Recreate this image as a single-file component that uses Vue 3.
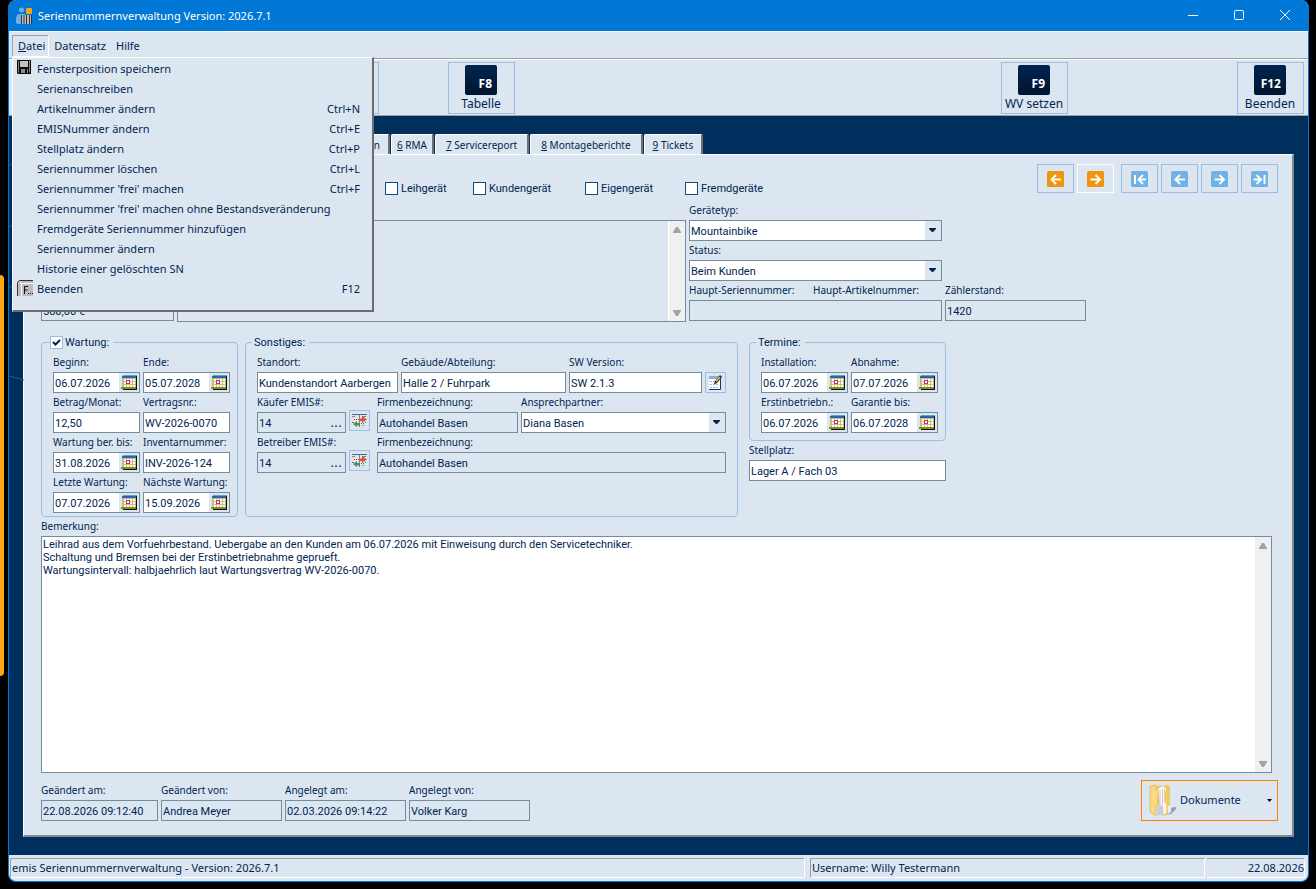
<script setup>
import { h, ref } from 'vue'

const menuItems = [
  { text: 'Fensterposition speichern', icon: 'disk' },
  { text: 'Serienanschreiben' },
  { text: 'Artikelnummer ändern', key: 'Ctrl+N' },
  { text: 'EMISNummer ändern', key: 'Ctrl+E' },
  { text: 'Stellplatz ändern', key: 'Ctrl+P' },
  { text: 'Seriennummer löschen', key: 'Ctrl+L' },
  { text: "Seriennummer 'frei' machen", key: 'Ctrl+F' },
  { text: "Seriennummer 'frei' machen ohne Bestandsveränderung" },
  { text: 'Fremdgeräte Seriennummer hinzufügen' },
  { text: 'Seriennummer ändern' },
  { text: 'Historie einer gelöschten SN' },
  { text: 'Beenden', key: 'F12', icon: 'fkey' }
]

const tabs = [
  { n: '6', text: 'RMA' },
  { n: '7', text: 'Servicereport' },
  { n: '8', text: 'Montageberichte' },
  { n: '9', text: 'Tickets' }
]

const navButtons = [
  { label: 'Zurück', dir: 'left', tone: 'orange' },
  { label: 'Vor', dir: 'right', tone: 'orange' },
  { label: 'Erster', dir: 'first', tone: 'blue' },
  { label: 'Vorheriger', dir: 'left', tone: 'blue' },
  { label: 'Nächster', dir: 'right', tone: 'blue' },
  { label: 'Letzter', dir: 'last', tone: 'blue' }
]
const arrowPaths = {
  left: 'M14 8.500H4.500M9 4L4.500 8.500L9 13',
  right: 'M3.500 8.500H13M8.500 4L13 8.500L8.500 13',
  first: 'M4 4V13M15 8.500H7.500M12 4L7.500 8.500L12 13',
  last: 'M13.500 4V13M2.500 8.500H10M5.500 4L10 8.500L5.500 13'
}

const maintenance = ref([
  { id: 'beginn', label: 'Beginn:', value: '06.07.2026', date: true },
  { id: 'ende', label: 'Ende:', value: '05.07.2028', date: true },
  { id: 'betrag', label: 'Betrag/Monat:', value: '12,50' },
  { id: 'vertrag', label: 'Vertragsnr.:', value: 'WV-2026-0070' },
  { id: 'berechnet', label: 'Wartung ber. bis:', value: '31.08.2026', date: true },
  { id: 'inventar', label: 'Inventarnummer:', value: 'INV-2026-124' },
  { id: 'letzte', label: 'Letzte Wartung:', value: '07.07.2026', date: true },
  { id: 'naechste', label: 'Nächste Wartung:', value: '15.09.2026', date: true }
])
const dates = ref([
  { id: 'installation', label: 'Installation:', value: '06.07.2026', date: true },
  { id: 'abnahme', label: 'Abnahme:', value: '07.07.2026', date: true },
  { id: 'erstinbetriebnahme', label: 'Erstinbetriebn.:', value: '06.07.2026', date: true },
  { id: 'garantie', label: 'Garantie bis:', value: '06.07.2028', date: true }
])
const audit = [
  { id: 'geaendert-am', label: 'Geändert am:', value: '22.08.2026 09:12:40' },
  { id: 'geaendert-von', label: 'Geändert von:', value: 'Andrea Meyer' },
  { id: 'angelegt-am', label: 'Angelegt am:', value: '02.03.2026 09:14:22' },
  { id: 'angelegt-von', label: 'Angelegt von:', value: 'Volker Karg' }
]
const remark = ref(`Leihrad aus dem Vorfuehrbestand. Uebergabe an den Kunden am 06.07.2026 mit Einweisung durch den Servicetechniker.
Schaltung und Bremsen bei der Erstinbetriebnahme geprueft.
Wartungsintervall: halbjaehrlich laut Wartungsvertrag WV-2026-0070.`)
const serviced = ref(true)

const r = (x, y, width, height, fill) => h('rect', { x, y, width, height, fill })
const svg = (w, ht, kids) =>
  h('svg', { width: w, height: ht, viewBox: `0 0 ${w} ${ht}`, 'aria-hidden': 'true' }, kids)

const CalendarIcon = () => svg(16, 15, [
  r(15, 1, 1, 13, '#111'), r(2, 14, 14, 1, '#111'),
  r(1, 1, 14, 12, '#c3c174'), r(2, 0, 14, 1, '#58a8cc'), r(1, 1, 14, 2, '#2d62ae'),
  r(3, 4, 11, 8, '#fff'),
  h('path', { d: 'M3 6.500H14M3 9.500H14M5.500 4V12M8.500 4V12M11.500 4V12', stroke: '#c3c174', fill: 'none' }),
  h('rect', { x: 5.5, y: 5.5, width: 3, height: 3, fill: '#fff', stroke: '#cc287c' }),
  r(0, 12, 15, 2, '#8a8820')
])
const SwapIcon = () => svg(17, 15, [
  r(1, 1, 15, 1, '#4d6690'), r(8, 2, 1, 12, '#7088ac'),
  r(1, 3, 3, 1, '#df6b53'), r(11, 3, 4, 1, '#54995b'),
  r(3, 6, 1, 1, '#c23'), r(5, 6, 1, 1, '#c23'), r(7, 6, 4, 1, '#d43a26'),
  h('path', { d: 'M11 3L16 6.500L11 10V8H8V5.500H11Z', fill: '#df5237' }),
  h('path', { d: 'M6 8L2 11L6 14V12.500H9V10H6Z', fill: '#4f8e55' }),
  r(10, 10, 1, 1, '#385'), r(12, 10, 1, 1, '#385'), r(14, 9, 1, 1, '#385'), r(1, 9, 2, 1, '#9a5a4a'), r(11, 12, 2, 1, '#79a')
])
const Caret = () => svg(7, 4, [h('path', { d: 'M0 0H7V1L4 4H3L0 1Z', fill: '#002552' })])
const ScrollArrows = () => h('div', { class: 'scroll', 'aria-hidden': 'true' }, [
  svg(8, 6, [h('path', { d: 'M3 0H5L8 5V6H0V5Z', fill: '#a3a3a3' })]),
  svg(8, 6, [h('path', { d: 'M3 6H5L8 1V0H0V1Z', fill: '#a3a3a3' })])
])
</script>

<template>
  <div class="desktop">
    <div class="sliver" aria-hidden="true"></div>
    <div class="window">
      <header class="titlebar">
        <svg width="17" height="18" viewBox="0 0 17 18" aria-hidden="true">
          <circle cx="5.500" cy="3" r="2.500" fill="#6cb2e6" />
          <path d="M0 16V12Q0 7 4 7H9L7 17H2Z" fill="#6cb2e6" />
          <rect x="10" y="1" width="6" height="6" rx="1" fill="#f7a50c" />
          <rect x="5" y="8" width="11" height="9" fill="#b9bcc0" />
          <path d="M5.500 8V17M8 8V17M10.500 8V17M13.500 8V17M15.500 8V17" stroke="#31343c" />
        </svg>
        <h1>Seriennummernverwaltung Version: 2026.7.1</h1>
        <div class="window-buttons">
          <button type="button" aria-label="Minimieren"><svg width="10" height="11" viewBox="0 0 10 11"><path d="M0 5.500H10" stroke="#fff" /></svg></button>
          <button type="button" aria-label="Maximieren"><svg width="10" height="11" viewBox="0 0 10 11"><rect x=".5" y=".5" width="9" height="9" rx="1" fill="none" stroke="#fff" /></svg></button>
          <button type="button" aria-label="Schließen"><svg width="10" height="11" viewBox="0 0 10 11"><path d="M0 0L10 10M10 0L0 10" stroke="#fff" /></svg></button>
        </div>
      </header>

      <nav class="menubar">
        <div class="menu-root">
          <button type="button" class="open"><u>D</u>atei</button>
          <div class="dropdown" role="menu">
            <button v-for="item in menuItems" :key="item.text" type="button" role="menuitem">
              <span class="menu-icon">
                <svg v-if="item.icon === 'disk'" width="14" height="14" viewBox="0 0 14 14" aria-hidden="true">
                  <path d="M0 0H14V14H1L0 13Z" fill="#0a0a0a" />
                  <rect x="3" y="1" width="8" height="6" fill="#c3c3c3" />
                  <path d="M1.500 1V12.500M12.500 2V12.500" stroke="#858585" />
                  <rect x="4" y="9" width="7" height="4" fill="#8b8b8b" /><rect x="8" y="9" width="2" height="4" fill="#111" /><rect x="12" y="1" width="1" height="1" fill="#ddd" />
                </svg>
                <svg v-else-if="item.icon === 'fkey'" width="16" height="16" viewBox="0 0 16 16" aria-hidden="true">
                  <path d="M0 16V2L2 0H16V16Z" fill="#bdbdbd" /><path d="M.5 16V2.500L2.500 .5H16" stroke="#333" fill="none" />
                  <path d="M4.500 16V4.500L3 2M4.500 3.500H16" stroke="#fff" fill="none" />
                  <path d="M7.500 14V6.500H11M7.500 10H10.500" stroke="#111" fill="none" /><path d="M11 13.500H12M13 13.500H14M15 13.500H16" stroke="#111" />
                </svg>
              </span>
              <span>{{ item.text }}</span>
              <kbd v-if="item.key">{{ item.key }}</kbd>
            </button>
          </div>
        </div>
        <button type="button">Datensatz</button>
        <button type="button">Hilfe</button>
      </nav>

      <div class="toolbar">
        <button type="button" class="tool hidden-tool" aria-label="Funktion"></button>
        <button type="button" class="tool f8"><span class="fkey">F8</span>Tabelle</button>
        <button type="button" class="tool f9"><span class="fkey">F9</span>WV setzen</button>
        <button type="button" class="tool f12"><span class="fkey">F12</span>Beenden</button>
      </div>

      <main class="workspace">
        <svg class="traces" width="15" height="280" viewBox="0 0 15 280" aria-hidden="true">
          <path d="M0 50L5 46M0 111L4 108M0 171H6M0 260L15 264" fill="none" stroke="#2a5788" />
        </svg>
        <div class="tabs" role="tablist">
          <button type="button" role="tab" class="tab covered">on</button>
          <button v-for="tab in tabs" :key="tab.n" type="button" role="tab" class="tab"><u>{{ tab.n }}</u>&nbsp;{{ tab.text }}</button>
        </div>

        <section class="panel">
          <div class="top-row">
            <div class="flags">
              <label><input type="checkbox" />Leihgerät</label>
              <label><input type="checkbox" />Kundengerät</label>
              <label><input type="checkbox" />Eigengerät</label>
              <label><input type="checkbox" />Fremdgeräte</label>
            </div>
            <div class="navs">
              <button v-for="(b, i) in navButtons" :key="i" type="button" :aria-label="b.label" :class="{ focus: i === 1, gap: i === 2 }">
                <svg width="17" height="16" viewBox="0 0 17 16" aria-hidden="true">
                  <rect width="17" height="16" rx="1.500" :fill="b.tone === 'orange' ? '#ee9610' : '#6fb2e9'" />
                  <path :d="arrowPaths[b.dir]" fill="none" stroke="#fffbee" stroke-width="2" />
                </svg>
              </button>
            </div>
          </div>

          <div class="head">
            <div class="field price">
              <input class="ro" readonly value="580,00 €" aria-label="Preis" />
            </div>
            <div class="memo">
              <textarea class="ro" readonly aria-label="Bezeichnung"></textarea>
              <ScrollArrows />
            </div>
            <div class="device">
              <div class="field">
                <label for="typ">Gerätetyp:</label>
                <div class="combo"><select id="typ"><option>Mountainbike</option></select><Caret /></div>
              </div>
              <div class="field">
                <label for="status">Status:</label>
                <div class="combo"><select id="status"><option>Beim Kunden</option></select><Caret /></div>
              </div>
              <div class="field">
                <div class="pair"><label for="haupt">Haupt-Seriennummer:</label><label for="haupt">Haupt-Artikelnummer:</label></div>
                <input id="haupt" class="ro" readonly />
              </div>
            </div>
            <div class="field counter">
              <label for="zaehler">Zählerstand:</label>
              <input id="zaehler" class="ro" readonly value="1420" />
            </div>
          </div>

          <div class="groups">
            <fieldset>
              <legend class="with-box"><label><input v-model="serviced" type="checkbox" />Wartung:</label></legend>
              <div class="grid-2">
                <div v-for="f in maintenance" :key="f.id" class="field">
                  <label :for="f.id">{{ f.label }}</label>
                  <div class="box">
                    <input :id="f.id" v-model="f.value" />
                    <button v-if="f.date" type="button" aria-label="Kalender"><CalendarIcon /></button>
                  </div>
                </div>
              </div>
            </fieldset>

            <fieldset class="misc">
              <legend>Sonstiges:</legend>
              <div class="line">
                <div class="field w-141"><label for="standort">Standort:</label><input id="standort" value="Kundenstandort Aarbergen" /></div>
                <div class="field w-165"><label for="gebaeude">Gebäude/Abteilung:</label><input id="gebaeude" value="Halle 2 / Fuhrpark" /></div>
                <div class="field w-133"><label for="sw">SW Version:</label><input id="sw" value="SW 2.1.3" /></div>
                <button type="button" class="icon-button" aria-label="Bearbeiten">
                  <svg width="15" height="17" viewBox="0 0 15 17" aria-hidden="true">
                    <rect x="1" y="2" width="11" height="13" fill="#fff" />
                    <rect x="1" y="2" width="11" height="3" fill="#8fa8ec" />
                    <path d="M2 7.500H10M2 10.500H10M2 13.500H10" stroke="#a2b8d8" stroke-dasharray="2 1" />
                    <path d="M12.500 4V15.500H1" fill="none" stroke="#20345c" />
                    <path d="M6 10.500L7 7L12 1L14 3L9 9Z" fill="#222" /><path d="M8 7.500L12 3" stroke="#f0cc32" stroke-width="1.500" />
                  </svg>
                </button>
              </div>
              <div class="line">
                <div class="field w-89"><label for="kaeufer">Käufer EMIS#:</label><div class="box ro"><input id="kaeufer" readonly value="14" /><button type="button" class="dots">...</button></div></div>
                <button type="button" class="icon-button raised" aria-label="Käufer wechseln"><SwapIcon /></button>
                <div class="field w-141"><label for="firma1">Firmenbezeichnung:</label><input id="firma1" class="ro" readonly value="Autohandel Basen" /></div>
                <div class="field grow"><label for="partner">Ansprechpartner:</label><div class="combo"><select id="partner"><option>Diana Basen</option></select><Caret /></div></div>
              </div>
              <div class="line">
                <div class="field w-89"><label for="betreiber">Betreiber EMIS#:</label><div class="box ro"><input id="betreiber" readonly value="14" /><button type="button" class="dots">...</button></div></div>
                <button type="button" class="icon-button raised" aria-label="Betreiber wechseln"><SwapIcon /></button>
                <div class="field grow"><label for="firma2">Firmenbezeichnung:</label><input id="firma2" class="ro" readonly value="Autohandel Basen" /></div>
              </div>
            </fieldset>

            <div class="third">
              <fieldset>
                <legend>Termine:</legend>
                <div class="grid-2">
                  <div v-for="f in dates" :key="f.id" class="field">
                    <label :for="f.id">{{ f.label }}</label>
                    <div class="box">
                      <input :id="f.id" v-model="f.value" />
                      <button type="button" aria-label="Kalender"><CalendarIcon /></button>
                    </div>
                  </div>
                </div>
              </fieldset>
              <div class="field"><label for="stellplatz">Stellplatz:</label><input id="stellplatz" value="Lager A / Fach 03" /></div>
            </div>
          </div>

          <div class="field remark">
            <label for="bemerkung">Bemerkung:</label>
            <div class="memo">
              <textarea id="bemerkung" v-model="remark"></textarea>
              <ScrollArrows />
            </div>
          </div>

          <div class="foot">
            <div v-for="(f, i) in audit" :key="f.id" class="field" :class="i ? 'w-121' : 'w-117'">
              <label :for="f.id">{{ f.label }}</label>
              <input :id="f.id" class="ro" readonly :value="f.value" />
            </div>
            <button type="button" class="documents">
              <svg width="28" height="33" viewBox="0 0 28 33" aria-hidden="true">
                <path d="M15 31L22 30L27 25V23L20 24Z" fill="#8f8f8e" opacity=".8" />
                <path d="M7 2L19 1L21 3V26L15 32L9 30Z" fill="#ecc869" />
                <path d="M9 5L14 2L17 5V29L12 31Z" fill="#fafafa" />
                <path d="M11 6V24M13.500 5V24" stroke="#c3c8d4" />
                <path d="M1 2L7 1V5L9 6V20L7 22V32L1 28Z" fill="#f8db80" stroke="#dab556" stroke-width=".7" />
                <path d="M15 5L18 7V20L21 21V28L17 31V20L15 18Z" fill="#f3ce69" />
                <path d="M8 22L14 20L15 31L7 32Z" fill="#d9dce2" />
                <path d="M9 23V31M11 22V31M13 22V31" stroke="#a9adb5" stroke-width=".6" />
                <path d="M19 22L22 21V28L19 30Z" fill="#e6edf6" />
              </svg>
              <span>Dokumente</span>
              <svg class="more" width="5" height="3" viewBox="0 0 5 3" aria-hidden="true"><path d="M0 0H5L2.500 3Z" fill="#000" /></svg>
            </button>
          </div>
        </section>
      </main>

      <footer class="statusbar">
        <span class="app">emis Seriennummernverwaltung - Version: 2026.7.1</span>
        <span class="user">Username: Willy Testermann</span>
        <span class="today">22.08.2026</span>
      </footer>
    </div>
  </div>
</template>

<style>
body { margin: 0; background: #000; }
.scroll {
  width: 17px; box-sizing: border-box; flex: none; background: #f0f0f0; border-left: 1px solid #fff;
  display: flex; flex-direction: column; justify-content: space-between; align-items: center; padding: 6px 0 5px;
}
</style>

<style scoped>
* { box-sizing: border-box; }
.desktop {
  --face: #dce6f0; --ink: #002552; --edge: #758c9c; --line: #9dbde4;
  min-height: 100vh; display: flex; position: relative; background: #000; padding: 0 7px 7px 8px;
  font: 10px/19px "Noto Sans", "Open Sans", sans-serif; color: var(--ink);
}
.sliver { position: absolute; left: 0; top: 275px; bottom: 213px; width: 4px; background: #faa619; border-radius: 0 4px 4px 0; }
.window {
  flex: 1; min-width: 0; display: flex; flex-direction: column; background: var(--face);
  border: 1px solid #0078d7; border-top: 0; border-radius: 8px;
}
button { font: inherit; color: inherit; background: none; border: 0; padding: 0; margin: 0; text-align: left; }
svg { display: block; flex: none; }

.titlebar { height: 31px; background: #0078d7; color: #fff; border-radius: 7px 7px 0 0; display: flex; align-items: center; padding-left: 7px; gap: 5px; }
.titlebar h1 { margin: 0; font-size: 11px; font-weight: 400; flex: 1; }
.window-buttons { display: flex; }
.window-buttons button { width: 46px; height: 31px; display: grid; place-items: center; }

.menubar { height: 28px; border-top: 1px solid #fff; border-bottom: 1px solid #a0a0a0; display: flex; padding: 3px 3px 0; font-size: 11px; }
.menubar > button { height: 20px; padding: 0 5px; }
.menu-root { position: relative; }
.open { height: 22px; padding: 0 3px 1px 5px; border: 1px solid #a0a0a0; border-right-color: #fff; border-bottom-color: #fff; display: block; }
.dropdown {
  position: absolute; z-index: 5; left: 0; top: 22px; width: 362px; padding: 1px 3px 11px 2px;
  background: var(--face); border: 1px solid #fff; border-right: 2px solid #6d6d6d; border-bottom: 2px solid #6d6d6d;
}
.dropdown button { display: flex; width: 100%; height: 20px; line-height: 20px; padding-right: 9px; }
.menu-icon { width: 22px; height: 16px; flex: none; display: block; padding-left: 2px; margin-top: 1px; }
.dropdown kbd { margin-left: auto; font: inherit; }

.toolbar { height: 57px; flex: none; border-top: 1px solid #fff; border-bottom: 1px solid #a0a0a0; display: flex; padding: 2px 4px 0 303px; }
.tool { width: 67px; height: 52px; border: 1px solid var(--line); font-size: 12px; line-height: 18px; display: flex; flex-direction: column; align-items: center; padding: 2px 1px 0 0; white-space: nowrap; }
.f8 { margin-left: 69px; }
.f9 { margin-left: auto; }
.f12 { margin-left: 169px; }
.fkey { width: 32px; height: 30px; flex: none; border-radius: 2px; background: linear-gradient(#002450, #00152f); color: #fff; font-size: 12px; font-weight: 700; line-height: 38px; text-align: right; padding-right: 5px; }

.workspace { flex: 1; display: flex; flex-direction: column; background: #002e5d; padding: 18px 14px 18px; position: relative; }
.traces { position: absolute; left: 0; top: 0; }
.tabs { display: flex; height: 20px; }
.tab { background: var(--face); border-top: 1px solid #fff; border-left: 1px solid #fff; border-right: 2px solid #6d7074; border-radius: 2px 2px 0 0; padding: 1px 8px 0; margin-right: 1px; white-space: nowrap; line-height: 18px; text-align: center; }
.tab:nth-child(2) { padding: 1px 5px 0; }
.tab:nth-child(3), .tab:nth-child(4) { padding: 1px 10px 0; }
.covered { width: 367px; text-align: right; }

.panel { flex: 1; display: flex; flex-direction: column; background: var(--face); border: 1px solid #fff; border-right: 2px solid #85898c; border-bottom: 2px solid #85898c; padding: 9px 14px 14px 17px; }
.top-row { display: flex; justify-content: space-between; height: 37px; }
.flags { display: flex; padding: 18px 0 0 344px; font: 11px/14px Roboto, "Liberation Sans", sans-serif; }
.flags label { display: flex; gap: 3px; height: 14px; }
.flags label:nth-child(1) { width: 88px; }
.flags label:nth-child(2) { width: 112px; }
.flags label:nth-child(3) { width: 100px; }
input[type="checkbox"] { appearance: none; flex: none; width: 13px; height: 13px; margin: 0; border: 1px solid #0f4c87; background: #fff; }
.navs { display: flex; gap: 3px; }
.navs button { width: 37px; height: 29px; border: 1px solid var(--line); display: grid; place-items: center; padding-top: 1px; }
.navs .focus { border-color: #fff; }
.navs .gap { margin-left: 4px; }

.field { display: flex; flex-direction: column; min-width: 0; }
.field label { height: 19px; line-height: 18px; white-space: nowrap; }
.field input, .box, .combo, .memo { width: 100%; height: 21px; border: 1px solid var(--edge); background: #fff; border-radius: 0; }
input, select, textarea { font: 11px/13px Roboto, "Liberation Sans", sans-serif; color: var(--ink); outline: 0; }
.field input { padding: 1px 1px 0; margin: 0; }
.field input.ro, .box.ro, textarea.ro { background: var(--face); }
.box, .combo { display: flex; position: relative; }
.box input { flex: 1; min-width: 0; width: 0; height: 19px; border: 0; background: transparent; }
.box button { width: 20px; height: 19px; background: var(--face); display: grid; place-items: center; }
.box .dots { width: 18px; background: none; font: 14px/19px "Liberation Sans", sans-serif; }
.combo { background: linear-gradient(var(--face), var(--face)) right / 16px 100% no-repeat #fff; }
.combo select { appearance: none; width: 100%; height: 19px; border: 0; background: none; padding: 1px 16px 0 1px; }
.combo svg { position: absolute; right: 5px; top: 7px; pointer-events: none; }
.memo { display: flex; height: auto; }
.memo textarea { flex: 1; min-width: 0; border: 0; margin: 0; resize: none; padding: 1px; background: #fff; overflow: hidden; }
.memo:has(.ro) { background: var(--face); }
.memo textarea.ro { background: var(--face); }

.head { display: flex; gap: 3px; padding-right: 6px; }
.head .price { width: 133px; justify-content: flex-end; padding-bottom: 1px; }
.head > .memo { width: 509px; height: 102px; margin-top: 19px; }
.head .device { width: 253px; }
.pair { display: flex; }
.pair label { flex: 0 0 124px; }
.head .counter { width: 141px; height: 120px; justify-content: flex-end; }

.groups { display: flex; align-items: stretch; margin-top: 12px; }
fieldset { margin: 0 7px 0 0; border: 1px solid var(--line); border-radius: 4px; padding: 2px 7px 3px 11px; min-width: 0; flex: none; }
legend { font: 11px/17px Roboto, "Liberation Sans", sans-serif; height: 17px; padding: 0 4px 0 2px; margin-left: -5px; }
.with-box label { display: flex; align-items: center; gap: 2px; height: 17px; }
.with-box { margin-left: -3px; padding-left: 0; }
.with-box input { border-color: var(--line); }
.with-box input:checked { background: #fff url("data:image/svg+xml,%3Csvg xmlns='http://www.w3.org/2000/svg' viewBox='0 0 11 11'%3E%3Cpath d='M2 5L4.500 7.500L9 3' fill='none' stroke='%23002552' stroke-width='2'/%3E%3C/svg%3E") center / 11px no-repeat; }
.grid-2 { display: grid; grid-template-columns: 87px 87px; column-gap: 3px; }
.misc { padding-right: 11px; margin-right: 11px; width: 493px; }
.line { display: flex; gap: 3px; }
.w-89 { width: 89px; }
.w-117 { width: 117px; }
.w-121 { width: 121px; }
.w-133 { width: 133px; }
.w-141 { width: 141px; }
.w-165 { width: 165px; }
.grow { flex: 1; }
.icon-button { width: 21px; height: 21px; border: 1px solid var(--line); display: grid; place-items: center; align-self: flex-end; flex: none; }
.raised { align-self: flex-start; margin: 17px 4px 0 0; }
.third { width: 197px; }
.third fieldset { margin: 0; padding-bottom: 7px; }

.remark { flex: 1; margin-right: 6px; }
.remark .memo { flex: 1; }
.foot { display: flex; gap: 3px; margin-top: 7px; align-items: flex-end; }
.documents { margin-left: auto; width: 137px; height: 41px; border: 1px solid #ff8000; display: flex; align-items: center; font-size: 11px; padding: 0 5px 0 7px; gap: 3px; }
.documents span { padding-bottom: 2px; }
.documents .more { margin-left: auto; }

.statusbar { display: flex; gap: 5px; padding: 3px 3px 3px 1px; font-size: 11px; height: 26px; flex: none; }
.statusbar span { height: 20px; line-height: 17px; border: 1px solid #fff; border-top-color: #a0a0a0; border-left-color: #a0a0a0; padding-left: 1px; white-space: nowrap; }
.app { flex: 1; }
.user { width: 395px; }
.statusbar .today { width: 98px; text-align: right; border-left: 0; margin-left: -3px; }
</style>
